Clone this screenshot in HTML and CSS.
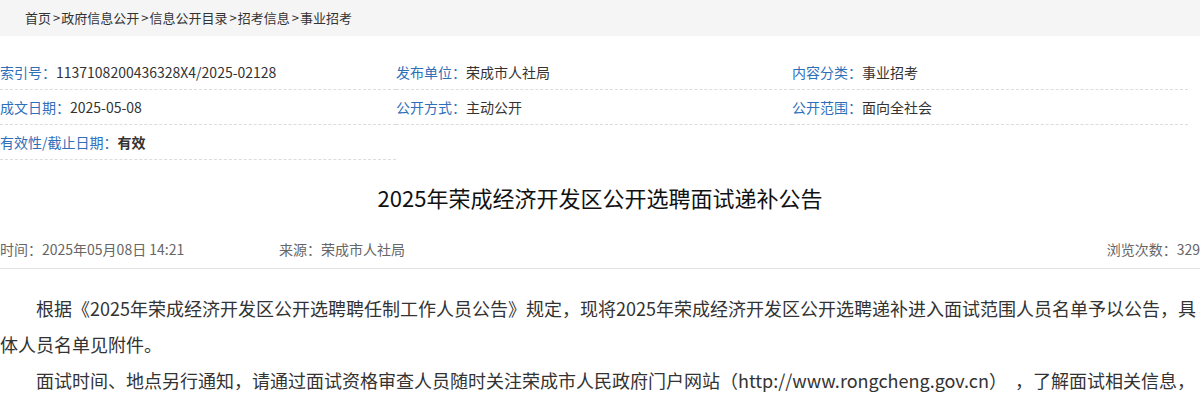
FILE: index.html
```html
<!DOCTYPE html>
<html lang="zh-CN">
<head>
<meta charset="utf-8">
<title>2025年荣成经济开发区公开选聘面试递补公告</title>
<link rel="stylesheet" href="styles.css">
</head>
<body>
<div class="crumbs">首页<span class="sep">&gt;</span>政府信息公开<span class="sep">&gt;</span>信息公开目录<span class="sep">&gt;</span>招考信息<span class="sep">&gt;</span>事业招考</div>
<div class="page">
  <div class="meta">
    <div class="cell"><span class="lab">索引号：</span><span class="val">1137108200436328X4/2025-02128</span></div>
    <div class="cell"><span class="lab">发布单位：</span><span class="val">荣成市人社局</span></div>
    <div class="cell"><span class="lab">内容分类：</span><span class="val">事业招考</span></div>
    <div class="cell"><span class="lab">成文日期：</span><span class="val">2025-05-08</span></div>
    <div class="cell"><span class="lab">公开方式：</span><span class="val">主动公开</span></div>
    <div class="cell"><span class="lab">公开范围：</span><span class="val">面向全社会</span></div>
    <div class="cell"><span class="lab">有效性/截止日期：</span><span class="val strong">有效</span></div>
  </div>
  <h1 class="title">2025年荣成经济开发区公开选聘面试递补公告</h1>
  <div class="info">
    <span class="time">时间：2025年05月08日 14:21</span>
    <span class="src">来源：荣成市人社局</span>
    <span class="views">浏览次数：329</span>
  </div>
  <div class="content">
    <p>根据《2025年荣成经济开发区公开选聘聘任制工作人员公告》规定，现将2025年荣成经济开发区公开选聘递补进入面试范围人员名单予以公告，具体人员名单见附件。</p>
    <p>面试时间、地点另行通知，请通过面试资格审查人员随时关注荣成市人民政府门户网站（http://www.rongcheng.gov.cn）&nbsp; ，了解面试相关信息，因个人原因未能及时获取相关信息的，责任自负。</p>
  </div>
</div>
</body>
</html>
```
FILE: styles.css
```css
* { box-sizing: border-box; }
html, body { margin: 0; padding: 0; background: #fff; }
body {
  font-family: "Noto Sans CJK SC", "Noto Sans", sans-serif;
  color: #333;
  width: 1200px;
}
.crumbs {
  background: #f5f5f5;
  height: 36px;
  line-height: 36px;
  padding-left: 25px;
  font-size: 13px;
  color: #333;
}
.sep { padding: 0 1px 0 2px; }
.page { padding-top: 19px; }
.meta {
  display: grid;
  grid-template-columns: repeat(3, 396px);
}
.cell {
  height: 35px;
  line-height: 34px;
  font-size: 14px;
  border-bottom: 1px dashed #dcdcdc;
  white-space: nowrap;
}
.lab { color: #2f6fba; }
.val { color: #333; }
.strong { font-weight: bold; }
.title {
  margin: 20px 0 0;
  font-size: 22px;
  font-weight: normal;
  line-height: 34px;
  color: #111;
  text-align: center;
}
.info {
  margin-top: 15px;
  display: flex;
  height: 40px;
  line-height: 40px;
  font-size: 14px;
  color: #666;
  border-bottom: 1px solid #e2e2e2;
}
.time { width: 279px; }
.views { margin-left: auto; }
.content { padding-top: 21px; }
.content p {
  margin: 0;
  font-size: 18px;
  line-height: 36px;
  text-indent: 2em;
  text-align: left;
  color: #333;
}
```
